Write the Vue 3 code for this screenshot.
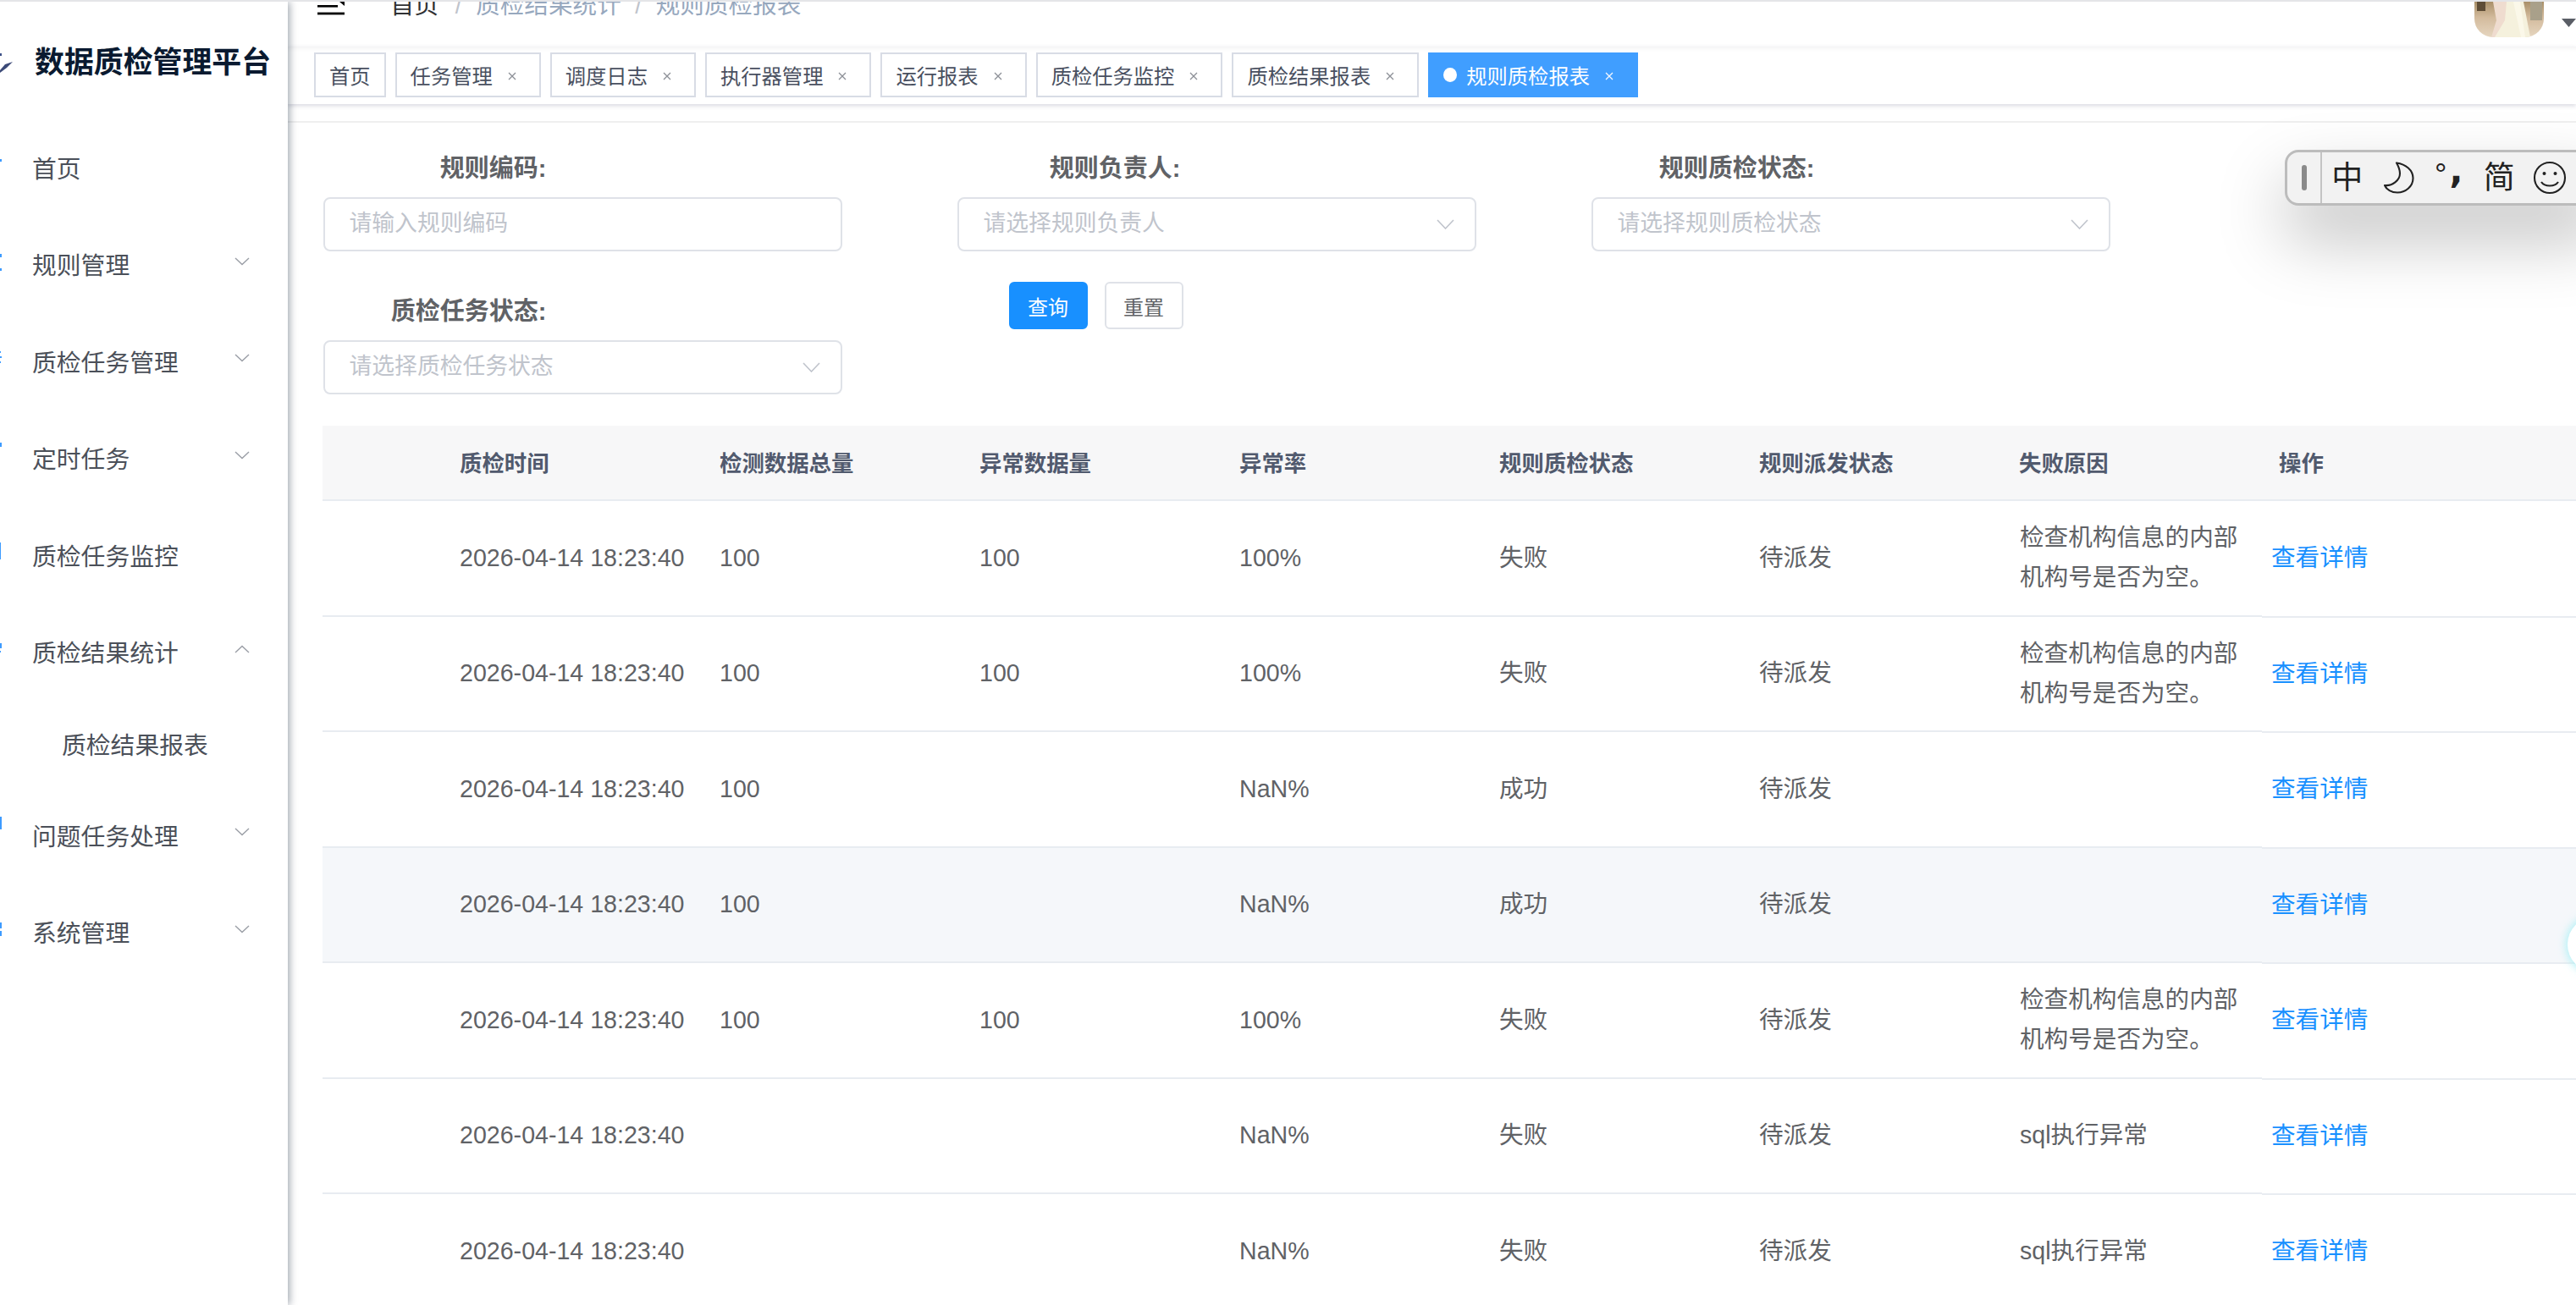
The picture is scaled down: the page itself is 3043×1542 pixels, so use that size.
<script setup>
const menu = [
  { label: '首页', marks: [[-9, 2, 3]] },
  { label: '规则管理', arrow: 'down', marks: [[-12, 2, 4], [5, 2, 3]] },
  { label: '质检任务管理', arrow: 'down', marks: [[-11, 1, 2], [-5, 2, 2], [1, 1, 2]] },
  { label: '定时任务', arrow: 'down', marks: [[-18, 2, 5]] },
  { label: '质检任务监控', marks: [[-14, 1, 20]] },
  { label: '质检结果统计', arrow: 'up', marks: [[-10, 2, 6], [-1, 1, 2]], sub: ['质检结果报表'] },
  { label: '问题任务处理', arrow: 'down', marks: [[-21, 2, 15]] },
  { label: '系统管理', arrow: 'down', marks: [[-11, 2, 7], [-1, 2, 6]] }
]
const tags = [
  { label: '首页', plain: true },
  { label: '任务管理' },
  { label: '调度日志' },
  { label: '执行器管理' },
  { label: '运行报表' },
  { label: '质检任务监控' },
  { label: '质检结果报表' },
  { label: '规则质检报表', active: true }
]
const fields = [
  { label: '规则编码:', ph: '请输入规则编码' },
  { label: '规则负责人:', ph: '请选择规则负责人', select: true },
  { label: '规则质检状态:', ph: '请选择规则质检状态', select: true },
  { label: '质检任务状态:', ph: '请选择质检任务状态', select: true }
]
const head = ['', '质检时间', '检测数据总量', '异常数据量', '异常率', '规则质检状态', '规则派发状态', '失败原因']
const reason = '检查机构信息的内部机构号是否为空。'
const time = '2026-04-14 18:23:40'
const rows = [
  ['100', '100', '100%', '失败', reason],
  ['100', '100', '100%', '失败', reason],
  ['100', '', 'NaN%', '成功', ''],
  ['100', '', 'NaN%', '成功', ''],
  ['100', '100', '100%', '失败', reason],
  ['', '', 'NaN%', '失败', 'sql执行异常'],
  ['', '', 'NaN%', '失败', 'sql执行异常']
]
</script>

<template>
  <div class="app">
    <aside class="side">
      <div class="brand">
        <svg class="brand-mark" width="16" height="26" viewBox="0 0 16 26">
          <path d="M0 3h2v3H0z" fill="#3f5288" />
          <path d="M0 23 L6 16 L15 13 L8 20 L0 26Z" fill="#3c4a78" />
        </svg>
        <span class="brand-text">数据质检管理平台</span>
      </div>
      <template v-for="m in menu" :key="m.label">
        <div class="item">
          <svg class="slice" width="3" height="50" viewBox="0 -25 3 50">
            <rect v-for="(r, i) in m.marks" :key="i" x="0" :y="r[0]" :width="r[1]" :height="r[2]" fill="#3d9bff" />
          </svg>
          <span>{{ m.label }}</span>
          <svg v-if="m.arrow" class="arrow" :class="{ up: m.arrow === 'up' }" width="18" height="10" viewBox="0 0 18 10">
            <path d="M1 1 L9 8.5 L17 1" fill="none" stroke="#9a9ea6" stroke-width="1.4" />
          </svg>
        </div>
        <div v-for="s in m.sub" :key="s" class="subitem">{{ s }}</div>
      </template>
    </aside>

    <main class="main">
      <header class="nav">
        <svg class="burger" width="32" height="16" viewBox="0 0 32 16">
          <rect x="0" y="4" width="24" height="2.6" fill="#000" />
          <rect x="0" y="12.6" width="32" height="2.8" fill="#000" />
          <path d="M26 0h6v5z" fill="#000" />
        </svg>
        <nav class="crumb">
          <span class="crumb-home">首页</span>
          <span class="crumb-sep">/</span>
          <span>质检结果统计</span>
          <span class="crumb-sep">/</span>
          <span>规则质检报表</span>
        </nav>
        <div class="user">
          <svg class="avatar" width="82" height="42" viewBox="0 0 82 42">
            <defs>
              <linearGradient id="floor" x1="0" y1="0" x2="0" y2="1">
                <stop offset="0" stop-color="#a98f68" />
                <stop offset="0.45" stop-color="#d3bb9d" />
                <stop offset="1" stop-color="#e6d6c0" />
              </linearGradient>
            </defs>
            <rect width="82" height="42" fill="url(#floor)" />
            <rect x="3" y="0" width="10" height="11" fill="#5f4d36" />
            <rect x="66" y="0" width="14" height="22" fill="#a9a08a" />
            <path d="M24 0 L58 0 L66 42 L22 42 L34 20 Z" fill="#f5f1dd" />
            <path d="M22 0 L38 0 L36 22 L24 42 L20 42 L26 22 Z" fill="#efdccf" />
            <path d="M46 0 h8 l6 42 h-5z" fill="#fbf8e9" />
          </svg>
          <svg class="caret" width="17" height="10" viewBox="0 0 17 10"><path d="M0 0h17l-8.5 10z" fill="#5a5e66" /></svg>
        </div>
      </header>

      <div class="tagbar">
        <div v-for="t in tags" :key="t.label" class="tag" :class="{ active: t.active, plain: t.plain }">
          <i v-if="t.active" class="dot"></i>
          <span>{{ t.label }}</span>
          <svg v-if="!t.plain" class="close" width="10" height="10" viewBox="0 0 10 10">
            <path d="M1 1 L9 9 M9 1 L1 9" stroke="currentColor" stroke-width="1.3" />
          </svg>
        </div>
      </div>
      <div class="strip"></div>

      <section class="content">
        <form class="form" @submit.prevent>
          <div v-for="f in fields" :key="f.label" class="field">
            <label class="label">{{ f.label }}</label>
            <div class="control">
              <input class="input" :placeholder="f.ph" />
              <svg v-if="f.select" width="21" height="12" viewBox="0 0 21 12">
                <path d="M1 1 L10.5 11 L20 1" fill="none" stroke="#c0c4cc" stroke-width="1.6" />
              </svg>
            </div>
          </div>
          <div class="actions">
            <button class="btn primary" type="button">查询</button>
            <button class="btn" type="button">重置</button>
          </div>
        </form>

        <div class="table">
          <div class="tr thead">
            <div v-for="(h, i) in head" :key="i" class="th">{{ h }}</div>
            <div class="th op">操作</div>
          </div>
          <div v-for="(r, i) in rows" :key="i" class="tr" :class="{ hover: i === 3 }">
            <div class="td"></div>
            <div class="td">{{ time }}</div>
            <div class="td">{{ r[0] }}</div>
            <div class="td">{{ r[1] }}</div>
            <div class="td">{{ r[2] }}</div>
            <div class="td">{{ r[3] }}</div>
            <div class="td">待派发</div>
            <div class="td reason">{{ r[4] }}</div>
            <div class="td op"><a class="link">查看详情</a></div>
          </div>
        </div>
      </section>
    </main>

    <div class="ime">
      <div class="ime-grip"><i></i></div>
      <div class="ime-cell han">中</div>
      <div class="ime-cell ime-moon">
        <svg width="36" height="38" viewBox="0 0 36 38">
          <path d="M15 1.5 C26 3 34.5 10 34.5 19.5 C34.5 29.5 25.5 36.5 16 36.5 C9 36.5 3 33 1 28 C10 29 19 22 19 14 C19 9 17 5 15 1.5Z" fill="none" stroke="#222" stroke-width="2.1" stroke-linejoin="round" />
        </svg>
      </div>
      <div class="ime-cell ime-punct"><span class="deg">°</span><span class="comma">,</span></div>
      <div class="ime-cell han">简</div>
      <div class="ime-cell">
        <svg width="40" height="40" viewBox="0 0 40 40">
          <circle cx="20" cy="20" r="18" fill="none" stroke="#222" stroke-width="2.1" />
          <circle cx="13.5" cy="15" r="2" fill="#222" />
          <circle cx="26.5" cy="15" r="2" fill="#222" />
          <path d="M10 25 C14 31 26 31 30 25" fill="none" stroke="#222" stroke-width="2.2" />
        </svg>
      </div>
    </div>
    <div class="float-ball"></div>
  </div>
</template>

<style scoped>
.app {
  position: relative;
  display: flex;
  width: 3043px;
  height: 1542px;
  overflow: hidden;
  box-sizing: border-box;
  border-top: 2px solid #e4e5e8;
  background: #fff;
  font-family: "Liberation Sans", "Noto Sans CJK SC", sans-serif;
  color: #606266;
}

/* sidebar */
.side {
  position: relative;
  z-index: 2;
  flex: none;
  width: 340px;
  background: #fff;
  box-shadow: 2px 0 9px rgba(0, 21, 41, 0.38);
}
.brand {
  position: relative;
  display: flex;
  align-items: center;
  height: 138px;
  padding-left: 41px;
  box-sizing: border-box;
}
.brand-mark {
  position: absolute;
  left: 0;
  top: 58px;
}
.brand-text {
  font-size: 34.9px;
  font-weight: 700;
  color: #0a1a30;
  white-space: nowrap;
  margin-top: -1px;
}
.item {
  position: relative;
  display: flex;
  align-items: center;
  height: 114.5px;
  padding-left: 38px;
  font-size: 28.8px;
  color: #4b5059;
}
.slice {
  position: absolute;
  left: 0;
  top: 32px;
}
.arrow {
  position: absolute;
  right: 45px;
  top: 49px;
}
.arrow.up {
  transform: scaleY(-1);
}
.subitem {
  display: flex;
  align-items: center;
  height: 102px;
  padding-left: 73px;
  font-size: 28.8px;
  color: #4b5059;
}

/* main */
.main {
  flex: 1;
  min-width: 0;
}
.nav {
  display: flex;
  height: 53px;
  padding-left: 35px;
  overflow: hidden;
  box-sizing: border-box;
}
.burger {
  flex: none;
}
.crumb {
  display: flex;
  gap: 16.5px;
  margin: -24px 0 0 54px;
  height: 56px;
  line-height: 56px;
  font-size: 28.6px;
  color: #97a8be;
  white-space: nowrap;
}
.crumb-home {
  color: #303133;
  margin-right: 3px;
}
.crumb-sep {
  color: #c0c4cc;
}
.user {
  display: flex;
  margin-left: auto;
}
.avatar {
  border-radius: 0 0 22px 22px;
}
.caret {
  margin: 20px 0 0 21px;
}
.tagbar {
  display: flex;
  align-items: flex-start;
  gap: 11px;
  height: 68px;
  padding: 7px 0 0 31px;
  box-sizing: border-box;
  box-shadow: 0 2px 5px rgba(60, 60, 100, 0.2), inset 0 6px 5px -4px rgba(0, 21, 41, 0.06);
}
.tag {
  display: flex;
  align-items: center;
  height: 53px;
  padding: 0 17px 0 16px;
  box-sizing: border-box;
  border: 2px solid #d8dce5;
  font-size: 24.3px;
  color: #495060;
  white-space: nowrap;
}
.tag.plain {
  padding: 0 16px;
}
.tag .close {
  margin: 2px 10px 0 18px;
  color: #8c8f96;
}
.tag.active {
  padding-left: 16px;
  background: #409eff;
  border-color: #409eff;
  color: #fff;
}
.tag.active .close {
  color: #f4f8ff;
}
.dot {
  width: 16px;
  height: 17px;
  margin-right: 11px;
  border-radius: 50%;
  background: #fff;
}
.strip {
  height: 20px;
  border-bottom: 2px solid #efefef;
}
.content {
  padding: 35px 0 0 41px;
}
.form {
  display: grid;
  grid-template-columns: repeat(3, 613px);
  column-gap: 136px;
  row-gap: 52px;
  padding-left: 0.5px;
}
.label {
  display: block;
  box-sizing: border-box;
  width: 264px;
  height: 53px;
  line-height: 38px;
  text-align: right;
  font-size: 29px;
  font-weight: 700;
  color: #606266;
}
.control {
  display: flex;
  align-items: center;
  height: 64px;
  padding: 0 24px 0 29px;
  box-sizing: border-box;
  border: 2px solid #dfe2e8;
  border-radius: 8px;
}
.input {
  flex: 1;
  min-width: 0;
  padding: 0 0 2px;
  border: 0;
  outline: 0;
  background: none;
  font: inherit;
  font-size: 26.8px;
  color: #606266;
}
.input::placeholder {
  color: #c0c4cc;
}
.actions {
  display: flex;
  align-items: flex-start;
  gap: 20px;
  margin: -16px 0 0 61px;
}
.btn {
  width: 93px;
  height: 56px;
  padding: 0;
  border: 2px solid #dfe2e8;
  border-radius: 6px;
  background: #fff;
  font: inherit;
  font-size: 24px;
  color: #606266;
}
.btn.primary {
  background: #1890ff;
  border-color: #1890ff;
  color: #fff;
}
.table {
  margin-top: 37px;
}
.tr {
  display: grid;
  grid-template-columns: 142px repeat(7, 307px) 1fr;
  grid-auto-rows: 136.5px;
}
.thead {
  grid-auto-rows: 89px;
  background: #f7f7f8;
}
.tr.hover {
  background: #f5f7fa;
}
.th,
.td {
  display: flex;
  align-items: center;
  min-width: 0;
  padding: 0 20px;
  box-sizing: border-box;
  border-bottom: 2px solid #e8ecf1;
}
.th {
  padding-bottom: 3px;
  font-size: 26.4px;
  font-weight: 700;
  color: #515a6e;
}
.td {
  font-size: 28.6px;
  line-height: 47px;
  color: #606266;
  white-space: nowrap;
}
.td.reason {
  white-space: normal;
  padding-left: 21px;
}
.td.op {
  padding-left: 11px;
  margin-bottom: -1px;
}
.link {
  color: #1890ff;
}

/* floating input-method bar */
.ime {
  position: absolute;
  z-index: 3;
  left: 2699px;
  top: 175px;
  display: flex;
  width: 380px;
  height: 66px;
  box-sizing: border-box;
  border: 3px solid #bcbcbc;
  border-radius: 16px;
  background: #f2f2f2;
  box-shadow: 0 38px 80px rgba(0, 0, 0, 0.26);
  color: #222;
}
.ime-grip {
  display: flex;
  align-items: center;
  justify-content: center;
  width: 39px;
  border-right: 2px solid #c4c4c4;
}
.ime-grip i {
  width: 6px;
  height: 30px;
  border-radius: 3px;
  background: #8a8a8a;
}
.ime-cell {
  display: flex;
  align-items: center;
  justify-content: center;
  width: 59.5px;
  font-size: 38px;
  line-height: 1;
}
.ime-cell.han {
  font-size: 37px;
}
.ime-moon {
  padding-left: 3px;
  box-sizing: border-box;
}
.ime-punct {
  gap: 3px;
  align-items: flex-start;
  margin-left: 1px;
}
.deg {
  font-size: 36px;
  margin-top: 9px;
}
.comma {
  font-family: "DejaVu Sans", sans-serif;
  font-size: 42px;
  font-weight: 700;
  margin-top: 1px;
}

.float-ball {
  position: absolute;
  z-index: 1;
  left: 3033px;
  top: 1081px;
  width: 66px;
  height: 66px;
  border-radius: 50%;
  background: #fff;
  box-shadow: 0 0 8px 3px rgba(170, 240, 245, 0.75);
}
</style>

<style>
html, body {
  margin: 0;
  overflow: hidden;
}
</style>
